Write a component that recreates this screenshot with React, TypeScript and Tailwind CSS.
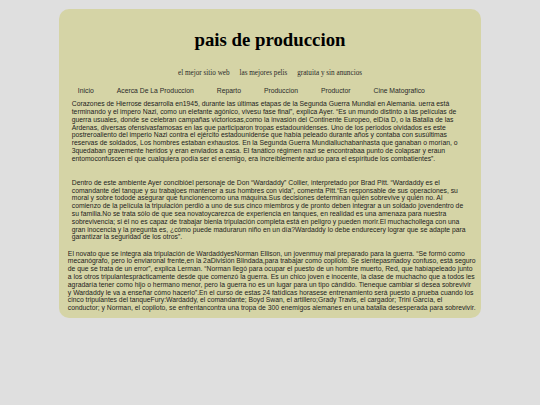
const navItems = ['Inicio', 'Acerca De La Produccion', 'Reparto', 'Produccion', 'Productor', 'Cine Matografico'];

const taglines = ['el mejor sitio web', 'las mejores pelis', 'gratuita y sin anuncios'];

const parrafoUno = [
  'Corazones de Hierrose desarrolla en1945, durante las últimas etapas de la Segunda Guerra Mundial en Alemania. uerra está',
  'terminando y el impero Nazi, como un elefante agónico, vivesu fase final”, explica Ayer. “Es un mundo distinto a las películas de',
  'guerra usuales, donde se celebran campañas victoriosas,como la invasión del Continente Europeo, elDía D, o la Batalla de las',
  'Ardenas, diversas ofensivasfamosas en las que participaron tropas estadounidenses. Uno de los periodos olvidados es este',
  'postreroaliento del imperio Nazi contra el ejército estadounidense que había peleado durante años y contaba con susúltimas',
  'reservas de soldados, Los hombres estaban exhaustos. En la Segunda Guerra Mundialluchabanhasta que ganaban o morían, o',
  '3quedaban gravemente heridos y eran enviados a casa. El fanático régimen nazi se encontrabaa punto de colapsar y eraun',
  'entomoconfuscen el que cualquiera podía ser el enemigo, era increíblemente arduo para el espíritude los combatientes”.',
];

const parrafoDos = [
  'Dentro de este ambiente Ayer concibióel personaje de Don “Wardaddy” Collier, interpretado por Brad Pitt. “Wardaddy es el',
  'comandante del tanque y su trabajoes mantener a sus hombres con vida”, comenta Pitt.“Es responsable de sus operaciones, su',
  'moral y sobre todode asegurar que funcionencomo una máquina.Sus decisiones determinan quién sobrevive y quién no. Al',
  'comienzo de la película la tripulación perdió a uno de sus cinco miembros y de pronto deben integrar a un soldado jovendentro de',
  'su familia.No se trata sólo de que sea novatoycarezca de experiencia en tanques, en realidad es una amenaza para nuestra',
  'sobrevivencia; si él no es capaz de trabajar bienla tripulación completa está en peligro y pueden morir.El muchachollega con una',
  'gran inocencia y la pregunta es, ¿cómo puede madurarun niño en un día?Wardaddy lo debe endurecery lograr que se adapte para',
  'garantizar la seguridad de los otros”.',
];

const parrafoTres = [
  'El novato que se integra ala tripulación de WardaddyesNorman Ellison, un jovenmuy mal preparado para la guerra. “Se formó como',
  'mecanógrafo, pero lo enviaronal frente,en la 2aDivisión Blindada,para trabajar como copiloto. Se sientepasmadoy confuso, está seguro',
  'de que se trata de un error”, explica Lerman. “Norman llegó para ocupar el puesto de un hombre muerto, Red, que habíapeleado junto',
  'a los otros tripulantesprácticamente desde que comenzó la guerra. Es un chico joven e inocente, la clase de muchacho que a todos les',
  'agradaría tener como hijo o hermano menor, pero la guerra no es un lugar para un tipo cándido. Tieneque cambiar si desea sobrevivir',
  'y Wardaddy le va a enseñar cómo hacerlo”.En el curso de estas 24 fatídicas horasese entrenamiento será puesto a prueba cuando los',
  'cinco tripulantes del tanqueFury:Wardaddy, el comandante; Boyd Swan, el artillero;Grady Travis, el cargador; Trini García, el',
  'conductor; y Norman, el copiloto, se enfrentancontra una tropa de 300 enemigos alemanes en una batalla desesperada para sobrevivir.',
];

const Lines = ({ lines }: { lines: string[] }) => (
  <>
    {lines.map((line, i) => (
      <span key={i} className="block whitespace-nowrap">
        {line}
      </span>
    ))}
  </>
);

export default function App() {
  return (
    <div className="min-h-screen bg-[#dfdfdf] pt-[8.6px] font-['Liberation_Sans',Arial,sans-serif] text-[#1c1c1c]">
      <div className="mx-auto w-[421.5px] rounded-[10px] bg-[#d5d4a6] px-[8.6px] pt-[20.6px] pb-[5.6px]">
        <h1 className="text-center font-['Liberation_Serif','Times_New_Roman',serif] text-[18.8px] leading-[22px] font-bold text-black">
          pais de produccion
        </h1>

        <div className="mt-[18.2px] flex justify-center gap-[9.8px] font-['Liberation_Serif','Times_New_Roman',serif] text-[7.2px] leading-[9px] text-[#2a2a2a]">
          {taglines.map((t) => (
            <span key={t}>{t}</span>
          ))}
        </div>

        <nav className="mt-[8.6px] flex gap-[23px] pl-[10px] text-[6.8px] leading-[8px] text-[#2a2a2a]">
          {navItems.map((item) => (
            <span key={item}>{item}</span>
          ))}
        </nav>

        <div className="text-[6.8px] leading-[7.8px]">
          <p className="mt-[5.2px] px-[3.9px]">
            <Lines lines={parrafoUno} />
          </p>
          <p className="mt-[16.2px] px-[3.9px]">
            <Lines lines={parrafoDos} />
          </p>
          <p className="mt-[8.6px]">
            <Lines lines={parrafoTres} />
          </p>
        </div>
      </div>
    </div>
  );
}
